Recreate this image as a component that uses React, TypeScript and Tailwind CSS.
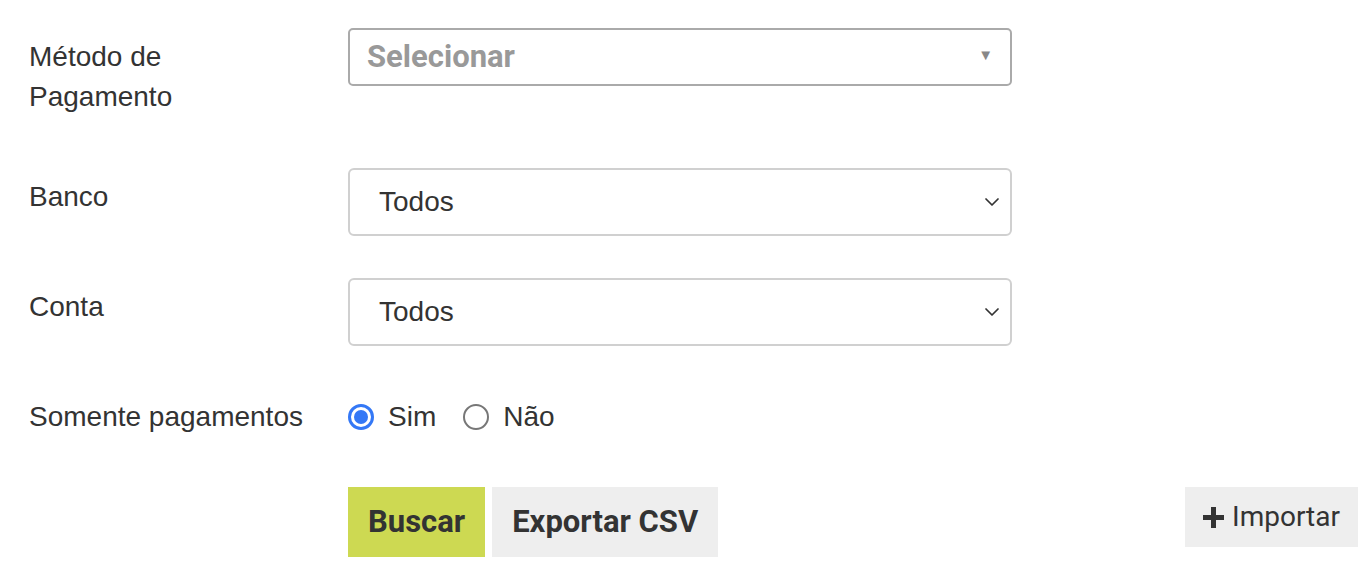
import { ChevronDown } from "lucide-react";

// --- DATA ---
const labelCls = "w-[319px] shrink-0 py-[9px] text-[28px] leading-[40px] text-[#333]";

function SelectBox({ value }: { value: string }) {
  return (
    <div className="flex h-[68px] w-[664px] items-center justify-between rounded-[6px] border-2 border-[#d0d0d0] bg-white pl-[29px] pr-[6px]">
      <span className="text-[28px] text-[#333]">{value}</span>
      <ChevronDown size={24} strokeWidth={1.75} className="text-[#333]" />
    </div>
  );
}

function Radio({ checked, label }: { checked?: boolean; label: string }) {
  return (
    <label className="flex items-center gap-[14px]">
      {checked ? (
        <span className="flex h-[26px] w-[26px] items-center justify-center rounded-full border-[3px] border-[#3478f6]">
          <span className="h-[14px] w-[14px] rounded-full bg-[#3478f6]" />
        </span>
      ) : (
        <span className="h-[26px] w-[26px] rounded-full border-2 border-[#777]" />
      )}
      <span className="text-[28px] text-[#333]">{label}</span>
    </label>
  );
}

// --- MAIN COMPONENT ---
export default function App() {
  return (
    <div
      className="flex min-h-[572px] w-full flex-col bg-white pl-[29px] pr-[12px] pt-[28px]"
      style={{ fontFamily: "'Liberation Sans', Arial, sans-serif" }}
    >
      {/* Método de pagamento */}
      <div className="mb-[42px] flex items-start">
        <div className={labelCls}>
          Método de
          <br />
          Pagamento
        </div>
        <div className="flex h-[58px] w-[664px] items-center justify-between rounded-[5px] border-2 border-[#aaa] bg-white pl-[17px] pr-[17px]">
          <span className="text-[31px] font-bold text-[#999]" style={{ fontFamily: "Roboto, sans-serif" }}>
            Selecionar
          </span>
          <span className="mb-[4px] text-[15px] text-[#888]">▼</span>
        </div>
      </div>

      {/* Banco */}
      <div className="mb-[42px] flex items-start">
        <div className={labelCls}>Banco</div>
        <SelectBox value="Todos" />
      </div>

      {/* Conta */}
      <div className="mb-[42px] flex items-start">
        <div className={labelCls}>Conta</div>
        <SelectBox value="Todos" />
      </div>

      {/* Somente pagamentos */}
      <div className="mb-[41px] flex items-center">
        <div className={labelCls}>Somente pagamentos</div>
        <div className="flex items-center gap-[27px]">
          <Radio checked label="Sim" />
          <Radio label="Não" />
        </div>
      </div>

      {/* Actions */}
      <div className="flex items-start" style={{ fontFamily: "Roboto, sans-serif" }}>
        <div className="w-[319px] shrink-0" />
        <div className="flex gap-[7px]">
          <button className="h-[70px] bg-[#cdd952] px-[20px] text-[31px] font-bold text-[#333]">Buscar</button>
          <button className="h-[70px] bg-[#eeeeee] px-[20px] text-[31px] font-bold text-[#333]">Exportar CSV</button>
        </div>
        <button className="ml-auto flex h-[60px] items-center gap-[8px] bg-[#eeeeee] px-[18px] text-[28px] text-[#333]">
          <svg width="21" height="21" viewBox="0 0 21 21">
            <path d="M8 0h5v8h8v5h-8v8H8v-8H0V8h8z" fill="#333" />
          </svg>
          Importar
        </button>
      </div>
    </div>
  );
}
